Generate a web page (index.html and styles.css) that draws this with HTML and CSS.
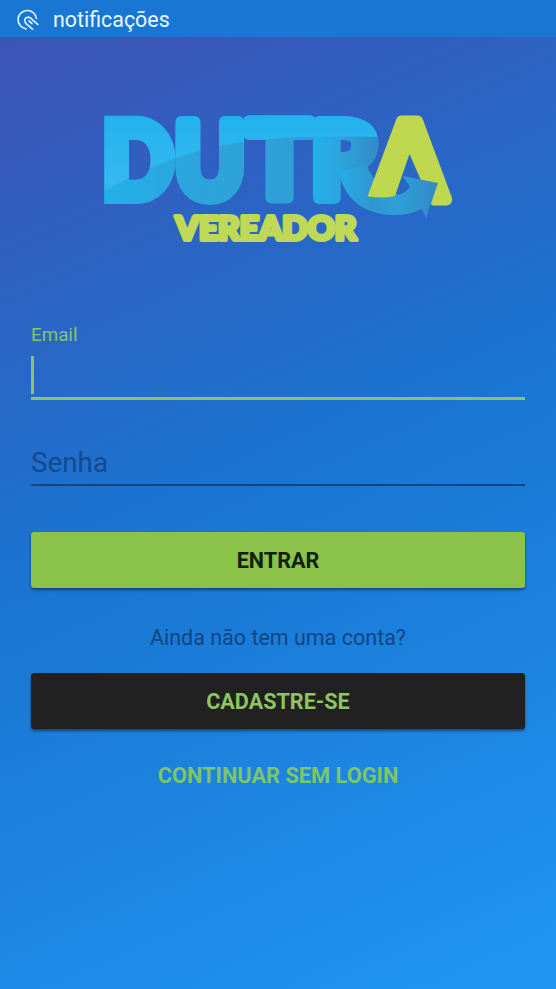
FILE: index.html
```
<!DOCTYPE html>
<html lang="pt-br">
<head>
  <meta charset="UTF-8">
  <meta name="viewport" content="width=device-width, initial-scale=1.0">
  <title>Dutra Vereador - Login</title>
  <link rel="stylesheet" href="styles.css">
</head>
<body>

  <header class="status-bar">
    <svg class="status-icon" viewBox="16 6 24 24">
      <path d="M26 27.8A9.2 9.2 0 1 1 36.4 17.5" />
      <path d="M32.5 28.2L25.8 22.4C23.4 19.5 25 16.2 28.4 16.2C30.5 16.4 31.6 17.6 32.6 19L37.8 23.4" />
      <path d="M29 19.8L32 22.6" />
    </svg>
    <span>notificações</span>
  </header>

  <main class="container">
    <svg class="logo" viewBox="100 110 360 140" role="img" aria-label="Dutra Vereador">
      <defs>
        <linearGradient id="blue" x1="0" y1="116" x2="0" y2="204" gradientUnits="userSpaceOnUse">
          <stop offset="0" stop-color="#22b2ec" />
          <stop offset="0.75" stop-color="#36b8f0" />
          <stop offset="1" stop-color="#24b0ea" />
        </linearGradient>
        <linearGradient id="tail" x1="335" y1="0" x2="440" y2="0" gradientUnits="userSpaceOnUse">
          <stop offset="0" stop-color="#25b0ea" />
          <stop offset="0.35" stop-color="#3096d0" />
          <stop offset="0.6" stop-color="#2e9fd8" />
          <stop offset="1" stop-color="#3388c4" />
        </linearGradient>
        <linearGradient id="shade" x1="104" y1="0" x2="380" y2="0" gradientUnits="userSpaceOnUse">
          <stop offset="0" stop-color="#22b0ea" />
          <stop offset="0.3" stop-color="#2ca5dc" />
          <stop offset="0.75" stop-color="#2f9fd6" />
          <stop offset="0.76" stop-color="#22b0ea" />
          <stop offset="0.86" stop-color="#2da4dc" />
          <stop offset="1" stop-color="#3488c8" />
        </linearGradient>
        <mask id="letters" maskUnits="userSpaceOnUse" x="100" y="110" width="360" height="140">
          <g class="logo-word logo-mask">
            <text class="logo-d" x="102.5" y="198" textLength="71" lengthAdjust="spacingAndGlyphs">D</text>
            <text x="174.5" y="198" textLength="70.5" lengthAdjust="spacingAndGlyphs">U</text>
            <text x="247.5" y="198" textLength="64" lengthAdjust="spacingAndGlyphs">T</text>
            <text x="311" y="198" textLength="68" lengthAdjust="spacingAndGlyphs">R</text>
          </g>
        </mask>
        <!-- opens the A below its apex -->
        <mask id="open-a" maskUnits="userSpaceOnUse" x="350" y="105" width="120" height="120">
          <rect x="350" y="105" width="120" height="120" fill="#fff" />
          <path d="M409.5 154L433 208H388Q393 203 395 196Z" fill="#000" />
          <path d="M360 194Q376 200 395 196V210H360Z" fill="#000" />
        </mask>
      </defs>
      <g mask="url(#letters)">
        <rect x="100" y="110" width="300" height="100" fill="url(#blue)" />
        <path d="M100 194C150 163 210 143 270 139C310 136 350 136 400 138V210H100Z" fill="url(#shade)" />
      </g>
      <path d="M339 172C342 190 356 215 394 215C408 215 418 212 426 206L418 193C400 200 372 190 367 164Z" fill="url(#tail)" />
      <g mask="url(#open-a)">
        <text class="logo-word logo-a" x="373.5" y="199" textLength="72" lengthAdjust="spacingAndGlyphs">A</text>
      </g>
      <path d="M394 197C401 195 407 191 410 187L403 176L438 183L426 218L420 205C412 211 402 214 390 214Z" fill="url(#tail)" />
      <text class="logo-sub" x="175.5" y="240" textLength="181" lengthAdjust="spacingAndGlyphs">VEREADOR</text>
    </svg>

    <form class="login-form">
      <div class="field field-active">
        <label class="field-label">Email</label>
        <div class="field-input"><span class="cursor"></span></div>
      </div>
      <div class="field field-senha">
        <label class="field-placeholder">Senha</label>
      </div>
      <button type="button" class="btn btn-entrar">ENTRAR</button>
      <p class="question">Ainda não tem uma conta?</p>
      <button type="button" class="btn btn-cadastro">CADASTRE-SE</button>
      <a class="skip-login">CONTINUAR SEM LOGIN</a>
    </form>
  </main>

</body>
</html>
```
FILE: styles.css
```
* {
  box-sizing: border-box;
}

body {
  margin: 0;
  min-height: 989px;
  display: flex;
  flex-direction: column;
  font-family: Roboto, sans-serif;
  background: linear-gradient(156deg, #3f51b5 0%, #1976d2 50%, #2196f3 100%);
  overflow: hidden;
}

.status-bar {
  height: 37px;
  padding: 1px 0 0 16px;
  display: flex;
  align-items: center;
  gap: 13px;
  background-color: #1976d2;
  color: #e8f8ff;
  font-size: 21.4px;
}

.status-icon {
  width: 24px;
  height: 24px;
  fill: none;
  stroke: #d9f3f8;
  stroke-width: 1.7;
  stroke-linecap: round;
  stroke-linejoin: round;
}

.container {
  flex: 1;
  padding: 73px 31px 0;
}

/* Logo */
.logo {
  display: block;
  width: 360px;
  height: 140px;
  margin-left: 69px;
  overflow: visible;
}

.logo-word {
  font-family: Lato, sans-serif;
  font-weight: 900;
  font-size: 104px;
  stroke-width: 12;
  stroke-linejoin: round;
}

.logo-mask {
  fill: #fff;
  stroke: #fff;
}

.logo-d {
  stroke-linejoin: miter;
}

.logo-a {
  font-size: 107px;
  fill: #bfd64f;
  stroke: #bfd64f;
}

.logo-sub {
  font-family: Lato, sans-serif;
  font-weight: 900;
  font-size: 33px;
  fill: #bfd855;
  stroke: #bfd855;
  stroke-width: 4.2;
  stroke-linejoin: round;
}

/* Formulário */
.login-form {
  display: flex;
  flex-direction: column;
  padding-top: 73px;
}

.field-active {
  height: 77px;
  border-bottom: 3px solid #88c468;
}

.field-label {
  display: block;
  height: 33px;
  line-height: 24px;
  font-size: 18.8px;
  color: #88c468;
}

.cursor {
  display: block;
  width: 3px;
  height: 38px;
  background-color: #88c468;
}

.field-senha {
  height: 86px;
  padding-top: 44px;
  border-bottom: 2px solid #10458a;
}

.field-placeholder {
  display: block;
  line-height: 37px;
  font-size: 27.8px;
  color: #124a92;
}

.btn {
  height: 56px;
  padding: 0;
  border: none;
  border-radius: 3px;
  font-family: inherit;
  font-size: 21.6px;
  font-weight: bold;
  box-shadow: 0 2px 3px rgba(0, 0, 0, 0.45);
}

.btn-entrar {
  margin-top: 46px;
  background-color: #8bc34a;
  color: #10200c;
}

.question {
  margin: 34px 0 20px;
  line-height: 31px;
  text-align: center;
  font-size: 21.5px;
  color: #104685;
}

.btn-cadastro {
  background-color: #212121;
  color: #8fc45f;
}

.skip-login {
  margin-top: 31px;
  line-height: 32px;
  text-align: center;
  font-size: 21.8px;
  font-weight: bold;
  color: #7dc566;
}
```
